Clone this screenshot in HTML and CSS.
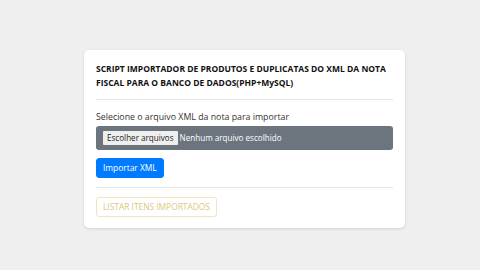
FILE: index.html
```html
<!doctype html>
<html lang="pt-br">
<head>
<meta charset="utf-8">
<title>Importador XML</title>
<link rel="stylesheet" href="styles.css">
</head>
<body>
<div class="page">
	<div class="card">
		<h1 class="title">SCRIPT IMPORTADOR DE PRODUTOS E DUPLICATAS DO XML DA NOTA FISCAL PARA O BANCO DE DADOS(PHP+MySQL)</h1>
		<hr class="sep-top">
		<form class="form">
			<label class="label">Selecione o arquivo XML da nota para importar</label>
			<div class="file">
				<span class="file-btn">Escolher arquivos</span>
				<span class="file-name">Nenhum arquivo escolhido</span>
			</div>
			<button type="button" class="btn btn-primary">Importar XML</button>
		</form>
		<hr class="sep-bottom">
		<a href="javascript:" class="btn btn-outline">LISTAR ITENS IMPORTADOS</a>
	</div>
</div>
</body>
</html>
```

FILE: styles.css
```css
html,body,h1,p,form{margin:0;padding:0}
html,body{width:100%;height:100%}
body{background:#efefef;font:9px/14px "Open Sans",sans-serif;color:#212529}
.page{display:flex;justify-content:center;padding-top:50px;padding-left:9px}
.card{width:297px;background:#fff;border-radius:5px;padding:12px 12px 11px;box-shadow:0 1px 3px rgba(0,0,0,.12)}
.title{font-size:8.5px;line-height:14px;font-weight:700;color:#111}
hr{border:0;border-top:1px solid #e6e6e6;margin:9px 0}
.sep-top{margin:9px 0 11px}
.sep-bottom{margin:9px 0}
.form{display:flex;flex-direction:column;align-items:flex-start}
.label{font-size:8.8px;line-height:12px;color:#333;margin-bottom:3px}
.file{display:flex;align-items:center;width:100%;height:24px;box-sizing:border-box;padding:0 7px;background:#6c757d;border-radius:3px;color:#fff;font-size:8.1px}
.file-btn{background:#efefef;color:#222;border-radius:1px;padding:0 4px;line-height:14px;margin-right:2px}
.btn{display:inline-block;box-sizing:border-box;height:20px;padding:0 6px;border-radius:3px;border:1px solid transparent;font:8.4px/18px "Open Sans",sans-serif;text-decoration:none}
.btn-primary{margin-top:8px;background:#007bff;border-color:#007bff;color:#fff}
.btn-outline{border-color:#f1e6bb;color:#dcc77c}
```
